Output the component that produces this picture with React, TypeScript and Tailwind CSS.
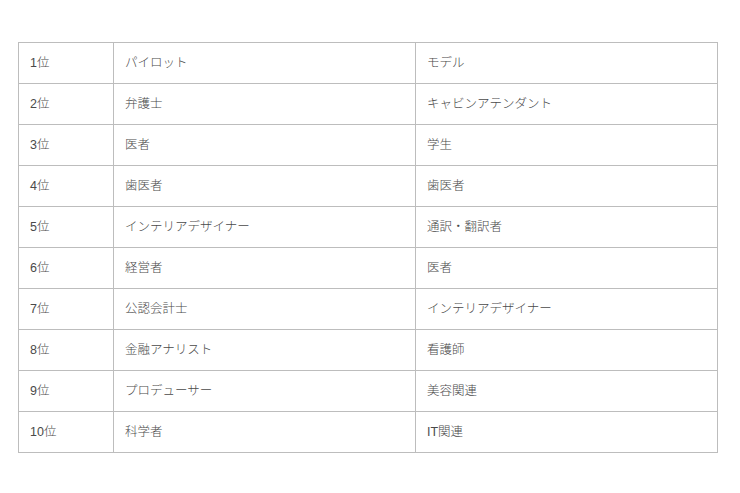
const rows = [
  ["1位", "パイロット", "モデル"],
  ["2位", "弁護士", "キャビンアテンダント"],
  ["3位", "医者", "学生"],
  ["4位", "歯医者", "歯医者"],
  ["5位", "インテリアデザイナー", "通訳・翻訳者"],
  ["6位", "経営者", "医者"],
  ["7位", "公認会計士", "インテリアデザイナー"],
  ["8位", "金融アナリスト", "看護師"],
  ["9位", "プロデューサー", "美容関連"],
  ["10位", "科学者", "IT関連"],
];

export default function App() {
  return (
    <div className="min-h-screen bg-white pt-[42px] pl-[18px] font-['Liberation_Sans','Noto_Sans_CJK_JP',sans-serif] text-[12.5px] font-light text-[#4a4a4a]">
      <table className="w-[700px] border-collapse">
        <tbody>
          {rows.map((r) => (
            <tr key={r[0]} className="h-[41px]">
              <td className="w-[95px] border border-[#bdbdbd] pl-[11px] pr-[10px] py-0">{r[0]}</td>
              <td className="w-[302px] border border-[#bdbdbd] pl-[11px] pr-[10px] py-0">{r[1]}</td>
              <td className="border border-[#bdbdbd] pl-[11px] pr-[10px] py-0">{r[2]}</td>
            </tr>
          ))}
        </tbody>
      </table>
    </div>
  );
}
